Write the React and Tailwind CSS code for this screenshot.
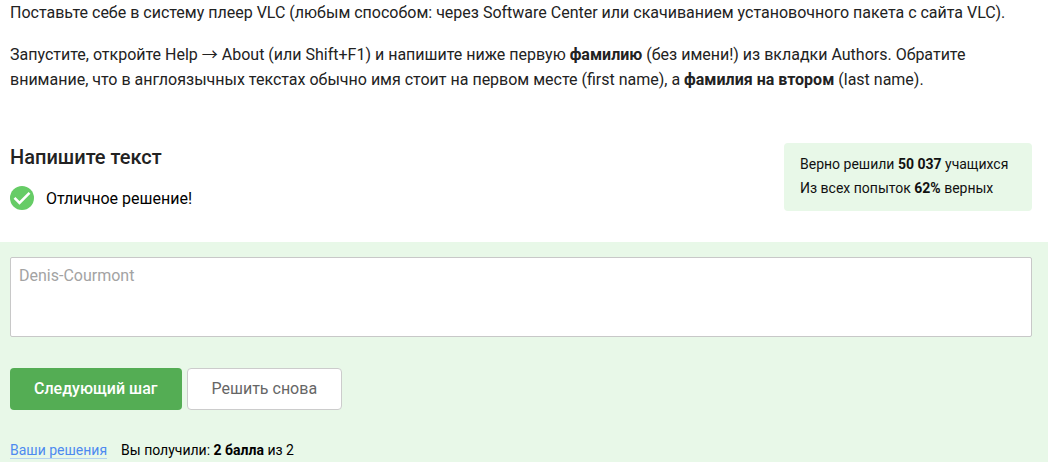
export default function App() {
  return (
    <main className="flex min-h-screen flex-col bg-white font-['Roboto',sans-serif] text-base leading-6 text-[#222222]">
      <section className="flex flex-col gap-[17px] px-[10px] leading-[25px]">
        <p>Поставьте себе в систему плеер VLC (любым способом: через Software Center или скачиванием установочного пакета с сайта VLC).</p>
        <p>
          Запустите, откройте Help <span className="font-['Noto_Sans_CJK_SC',sans-serif] leading-none">→</span> About (или Shift+F1) и напишите ниже первую <b>фамилию</b> (без имени!) из вкладки Authors. Обратите внимание, что в англоязычных текстах обычно имя стоит на первом месте (first name), а <b>фамилия на втором</b> (last name).
        </p>
      </section>
      <section className="mt-[51px] flex items-start justify-between pr-4 pl-[10px]">
        <div>
          <h2 className="text-xl leading-7 font-medium">Напишите текст</h2>
          <p className="mt-4 flex items-center gap-3 text-black">
            <svg className="-mt-0.5 size-6" viewBox="0 0 24 24" aria-hidden="true">
              <circle cx="12" cy="12" r="12" fill="#66cc66" />
              <path d="M4.5 11.8l5 5L19.5 6.8" fill="none" stroke="#fff" strokeWidth="2.6" />
            </svg>
            Отличное решение!
          </p>
        </div>
        <aside className="min-w-[248px] rounded bg-[#e8f8e8] px-4 pt-[9px] pb-[11px] text-sm leading-6 text-[#111111]">
          <p>Верно решили <b>50 037</b> учащихся</p>
          <p>Из всех попыток <b>62%</b> верных</p>
        </aside>
      </section>
      <section className="mt-[31px] grow bg-[#e8f8e8] pt-[15px] pr-4 pl-[10px]">
        <textarea aria-label="Ответ" disabled defaultValue="Denis-Courmont" className="block h-20 w-full resize-none rounded-xs border border-[#c8c8c8] bg-white px-2 py-[6px] text-[#a3a3a3]" />
        <div className="mt-[31px] flex gap-[5px]">
          <button type="button" className="h-[42px] rounded bg-[#54ad54] px-6 font-medium text-white">Следующий шаг</button>
          <button type="button" className="h-[42px] rounded border border-[#cccccc] bg-white px-6 text-[#666666]">Решить снова</button>
        </div>
        <div className="mt-8 flex gap-[14px] text-sm leading-4 text-black">
          <a href="#solutions" className="border-b border-[#b5d3f0] text-[#4d8af0]">Ваши решения</a>
          <p>Вы получили: <b>2 балла</b> из 2</p>
        </div>
      </section>
    </main>
  );
}
